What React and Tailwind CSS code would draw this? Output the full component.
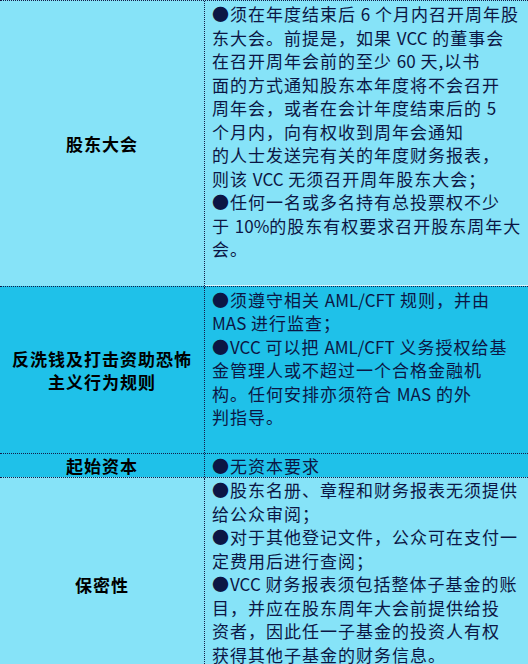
import React from "react";

const rows = [
  {
    label: ["股东大会"],
    bg: "bg-[#86e3f8]",
    pad: "pt-[1px] pb-[24px]",
    lines: [
      "●须在年度结束后 6 个月内召开周年股",
      "东大会。前提是，如果 VCC 的董事会",
      "在召开周年会前的至少 60 天,以书",
      "面的方式通知股东本年度将不会召开",
      "周年会，或者在会计年度结束后的 5",
      "个月内，向有权收到周年会通知",
      "的人士发送完有关的年度财务报表，",
      "则该 VCC 无须召开周年股东大会；",
      "●任何一名或多名持有总投票权不少",
      "于 10%的股东有权要求召开股东周年大",
      "会。",
    ],
    divider: true,
  },
  {
    label: ["反洗钱及打击资助恐怖", "主义行为规则"],
    bg: "bg-[#1fc1e9]",
    pad: "pt-[1px] pb-[24px]",
    lines: [
      "●须遵守相关 AML/CFT 规则，并由",
      "MAS 进行监查；",
      "●VCC 可以把 AML/CFT 义务授权给基",
      "金管理人或不超过一个合格金融机",
      "构。任何安排亦须符合 MAS 的外",
      "判指导。",
    ],
  },
  {
    label: ["起始资本"],
    bg: "bg-[#1fc1e9]",
    pad: "pt-0 pb-0",
    lines: ["●无资本要求"],
  },
  {
    label: ["保密性"],
    bg: "bg-[#86e3f8]",
    pad: "pt-0 pb-[24px]",
    lines: [
      "●股东名册、章程和财务报表无须提供",
      "给公众审阅；",
      "●对于其他登记文件，公众可在支付一",
      "定费用后进行查阅；",
      "●VCC 财务报表须包括整体子基金的账",
      "目，并应在股东周年大会前提供给投",
      "资者，因此任一子基金的投资人有权",
      "获得其他子基金的财务信息。",
    ],
  },
];

// latin runs get no letter spacing, like the original
const Line = ({ text }) => {
  const parts = text.split(/([A-Za-z0-9%/]+)/);
  return (
    <div className="h-[23.5px]">
      {parts.map((p, k) =>
        k % 2 === 1 ? (
          <span key={k} className="tracking-normal">
            {p}
          </span>
        ) : (
          <span key={k}>{p}</span>
        )
      )}
    </div>
  );
};

export default function App() {
  return (
    <div className="w-[528px] h-[664px] overflow-hidden bg-[#86e3f8] font-['Noto_Sans_CJK_SC',sans-serif]">
      {rows.map((row, i) => (
        <div
          key={i}
          className={`grid grid-cols-[205px_1fr] border-t border-dotted border-[#141c48] ${row.bg}`}
        >
          <div className="flex flex-col items-center justify-center border-r border-dotted border-[#141c48] text-[17px] leading-[23px] font-bold tracking-[1px] text-black">
            {row.label.map((l) => (
              <div key={l}>{l}</div>
            ))}
          </div>
          <div
            className={`pl-[7px] ${row.pad} text-[17px] leading-[23.5px] tracking-[1px] text-[#0c1644] whitespace-nowrap overflow-hidden ${
              row.divider ? "border-b border-[#d8f6fd]" : ""
            }`}
          >
            {row.lines.map((l, j) => (
              <Line key={j} text={l} />
            ))}
          </div>
        </div>
      ))}
    </div>
  );
}
